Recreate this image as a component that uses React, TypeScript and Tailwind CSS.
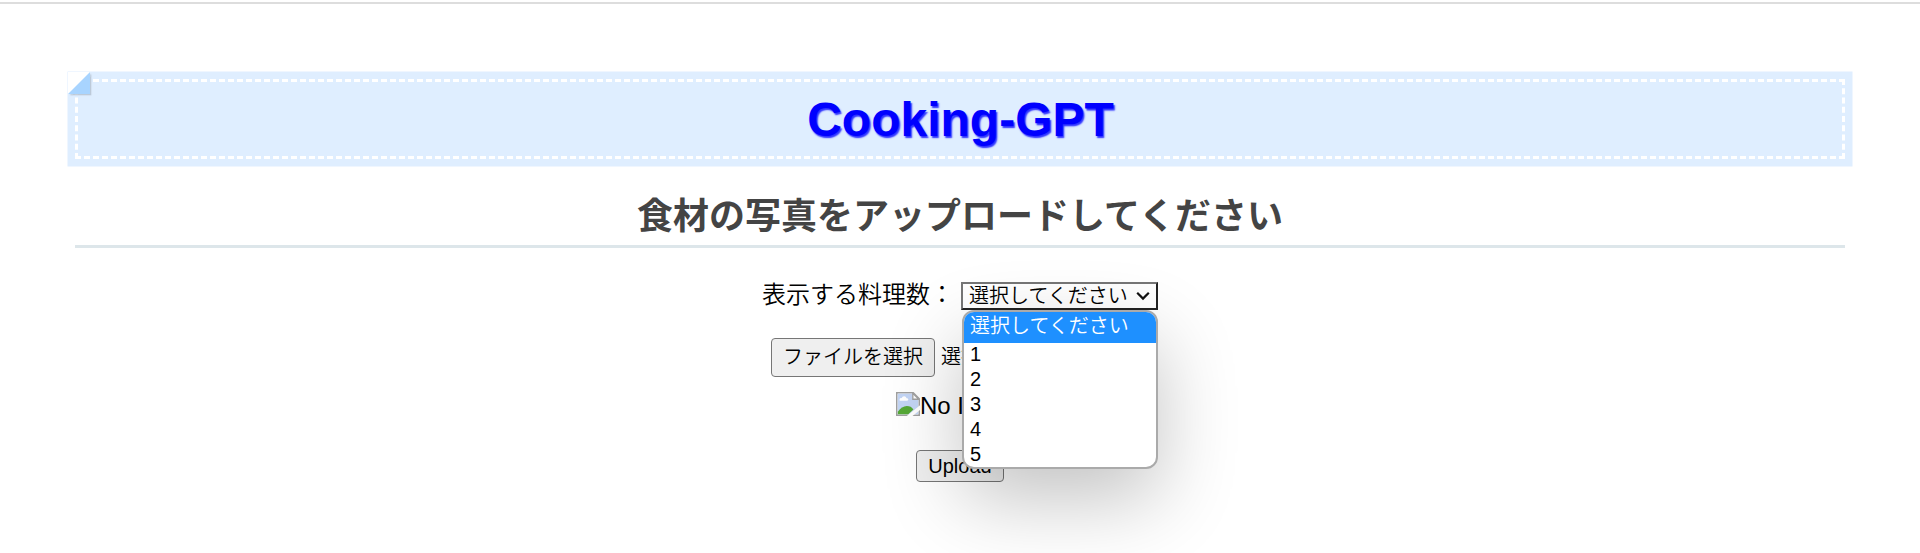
const jp = "font-['Liberation_Sans','Noto_Sans_CJK_JP',sans-serif]";

function BrokenImage() {
  return (
    <svg width="24" height="24" viewBox="0 0 16 16" className="block">
      <path d="M.5.5h11l4 4v11H.5z" fill="#fff" stroke="#a0a0a0" />
      <path d="M1.200 1.200h9.600v4h4v9.600H1.200z" fill="#c3d5f5" />
      <path d="M2.500 5.800c-.6-1.500.7-2.200 1.300-1.600C4.200 2.400 6.700 2.400 7 4.200c1.400-.2 1.600 1.600.4 1.600z" fill="#fff" />
      <path d="M1.200 14.800v-1.600C3 10.800 5 9.400 7.200 9.400c2 0 3.400.8 4.400 2.200L8.200 14.800z" fill="#55a836" />
      <path d="M11.200.8v4h4z" fill="#fff" stroke="#a0a0a0" strokeWidth=".9" />
      <path d="M7.200 16L16 8.800v3.200L11 16z" fill="#fff" />
    </svg>
  );
}

export default function App() {
  return (
    <main className={`h-[553px] overflow-hidden bg-white pt-[2px] text-black ${jp}`}>
      <div className="h-[2px] bg-[#ddd]" />
      <div className="mx-[75px] pt-[75px] text-center">
        <h1 className="relative flex h-20 items-center justify-center border-[3px] border-dashed border-white bg-[#dfeeff] pl-[1px] pt-[2px] text-[48px] font-bold leading-none text-[#0000ff] shadow-[0_0_0_7.5px_#dfeeff] [text-shadow:1.5px_1.5px_1.5px_rgba(0,0,255,0.8)]">
          <span className="absolute -left-[10px] -top-[10px] size-0 border-b-[22.5px] border-l-[22.5px] border-b-[#a8d4ff] border-l-white shadow-[1.5px_1.5px_1.5px_rgba(0,0,0,0.15)]" />
          <span>Cooking-GPT</span>
        </h1>
        <h2 className="mt-[29px] h-[60px] border-b-[3px] border-[#dde6ea] text-[36px] font-bold leading-[58px] text-[#444]">
          食材の写真をアップロードしてください
        </h2>
        <div className="mt-[30px] flex h-[36px] items-center justify-center gap-[7px] text-[24px]">
          <span className="-mt-[2px] font-[350]">表示する料理数：</span>
          <div className="relative flex h-7 w-[197px] items-center justify-between border-2 border-[#767676] border-b-[#222] border-r-[#222] pl-[6px] pr-[6px] text-[20px] font-[350] leading-6">
            <span>選択してください</span>
            <svg width="14" height="10" viewBox="0 0 14 10" fill="none" stroke="#111" strokeWidth="2.200">
              <path d="M1.200 1.800l5.800 5.800 5.800-5.800" />
            </svg>
            <ul className="absolute -left-px top-[26px] z-10 h-[159px] w-[196px] overflow-hidden rounded-[12px] border-2 border-[#aaa] bg-white text-left font-normal shadow-[0_30px_80px_rgba(0,0,0,0.24)]">
              <li className="h-[31px] bg-[#1e90ff] pl-[6px] font-[350] leading-[29px] text-white">選択してください</li>
              {[1, 2, 3, 4, 5].map((n) => (
                <li key={n} className="h-[25px] pl-[6px] leading-[23px]">{n}</li>
              ))}
            </ul>
          </div>
        </div>
        <div className="mt-[24px] flex justify-center gap-[6px] pr-[29px] text-[20px] font-[350]">
          <span className="flex h-[39px] w-[164px] items-center justify-center rounded-[4px] border border-[#767676] bg-[#efefef] pb-[2px]">ファイルを選択</span>
          <span className="leading-[38px]">選択されていません</span>
        </div>
        <div className="mt-[15px] flex justify-center text-[24px] leading-[28px]">
          <BrokenImage />
          <span>No Image</span>
        </div>
        <div className="mx-auto mt-[30px] flex h-8 w-[88px] items-center justify-center rounded-[4px] border border-[#767676] bg-[#efefef] text-[20px]">Upload</div>
      </div>
    </main>
  );
}
